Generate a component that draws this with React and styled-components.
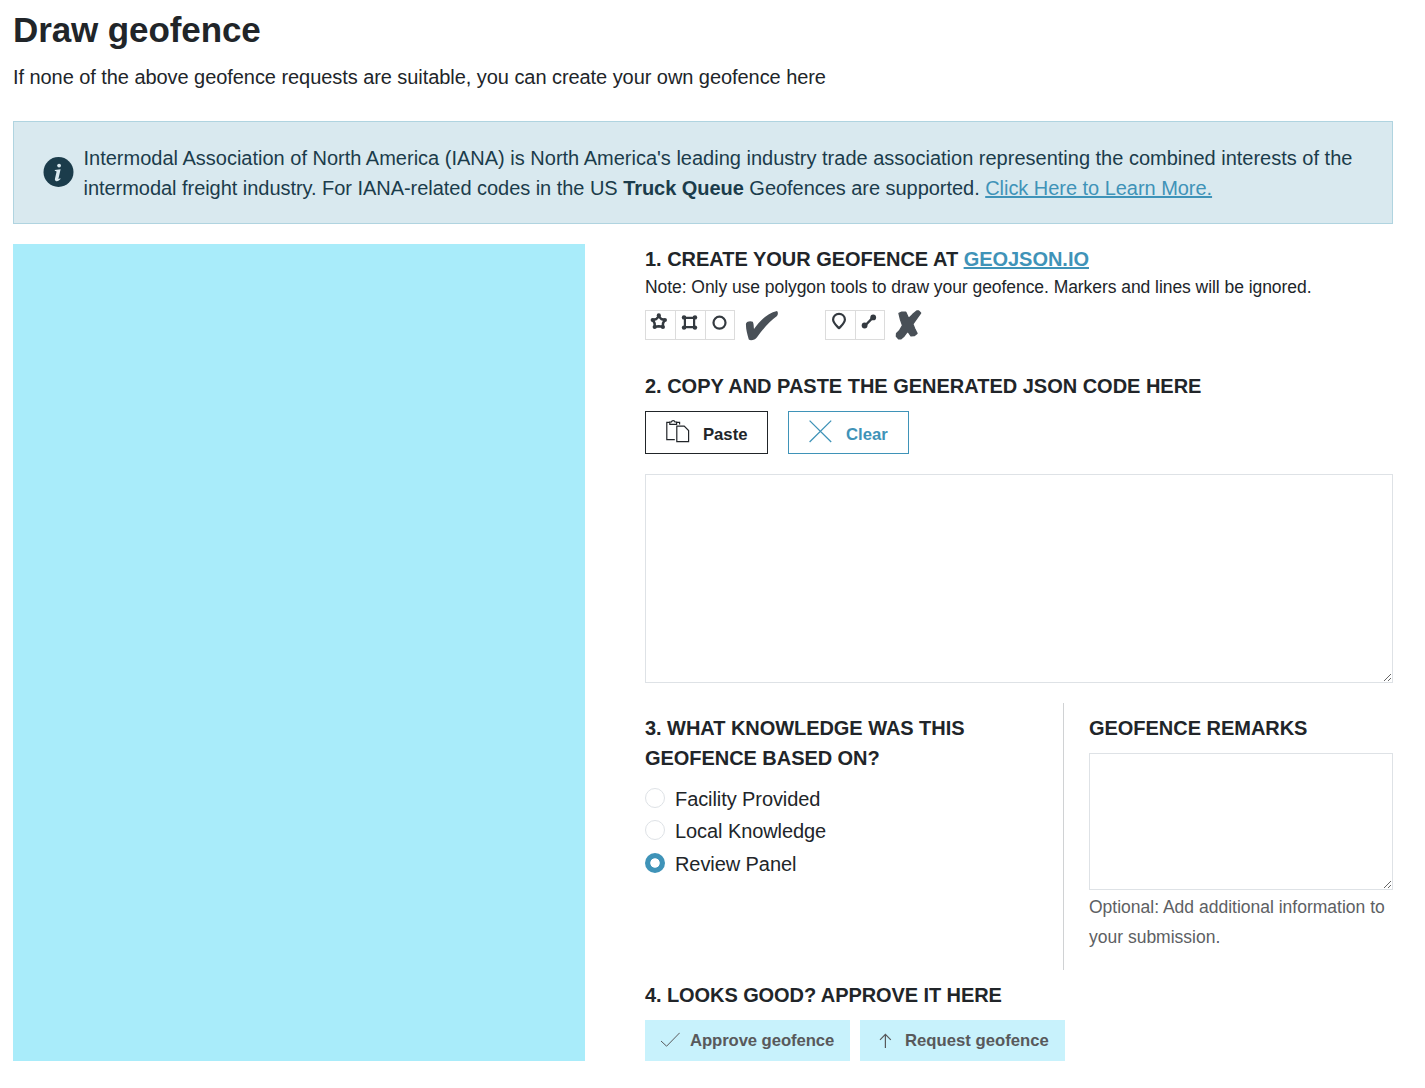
import React, { useState } from 'react';
import styled, { createGlobalStyle, css } from 'styled-components';

const GlobalStyle = createGlobalStyle`
  *, *::before, *::after { box-sizing: border-box; }
  body {
    margin: 0;
    background: #fff;
    color: #212529;
    font: 20px/30px "Liberation Sans", Helvetica, Arial, sans-serif;
  }
  svg { display: block; }
`;

const Page = styled.main`
  width: 1380px;
  margin-left: 13px;
  padding-top: 9px;
`;

const Title = styled.h1`
  margin: 0;
  font-size: 35px;
  line-height: 42px;
  letter-spacing: -0.1px;
`;

const Lead = styled.p`
  margin: 11px 0 29px;
  letter-spacing: -0.06px;
`;

const Notice = styled.section`
  display: flex;
  align-items: center;
  gap: 9.5px;
  height: 103px;
  margin-bottom: 20px;
  padding: 0 29px;
  border: 1px solid #b0d4e0;
  background: #d9e9ef;
  color: #1b3c4b;
`;

const NoticeIcon = styled.svg`
  flex: none;
  width: 31px;
  height: 31px;
`;

const NoticeText = styled.p`
  margin: 1px 0 0;
  white-space: nowrap;
`;

const NoticeLine = styled.span`
  display: block;
  letter-spacing: ${(p) => p.$spacing || 0}px;
`;

const Link = styled.a`
  color: #3f93b8;
  text-decoration: underline;
  text-decoration-thickness: 2px;
  text-underline-offset: 1px;
  text-decoration-skip-ink: none;
`;

const Columns = styled.div`
  display: grid;
  grid-template-columns: 572px 748px;
  column-gap: 60px;
  height: 817px;
`;

const MapPane = styled.div`
  background: #a9ecfa;
`;

const Steps = styled.div`
  display: flex;
  flex-direction: column;
`;

const Heading = styled.h2`
  margin: 0;
  font-size: 20px;
  line-height: 30px;
  text-transform: uppercase;
  letter-spacing: ${(p) => p.$spacing || 0}px;
`;

const Note = styled.p`
  margin: 0 0 10px;
  font-size: 17.5px;
  line-height: 26px;
  letter-spacing: -0.055px;
`;

const ToolRow = styled.div`
  display: flex;
  align-items: center;
  height: 30px;
  margin-bottom: 31px;
`;

const ToolGroup = styled.div`
  display: flex;
  border: 1px solid #dcdcdc;
`;

const ToolCell = styled.div`
  width: ${(p) => p.$w || 30}px;
  height: 28px;
  color: #343a40;

  & + & {
    border-left: 1px solid #dcdcdc;
  }

  svg {
    width: 28px;
    height: 28px;
  }
`;

const Verdict = styled.svg`
  width: 34px;
  height: 32px;
  margin: 0 ${(p) => p.$after || 0}px 0 10px;
  color: #495057;
`;

const Actions = styled.div`
  display: flex;
  gap: ${(p) => p.$gap}px;
  margin: 10px 0 ${(p) => p.$after || 0}px;
`;

const ButtonBase = styled.button`
  display: flex;
  align-items: center;
  margin: 0;
  font: 700 16.7px/24px "Liberation Sans", Helvetica, Arial, sans-serif;
  letter-spacing: -0.02px;
  white-space: nowrap;
`;

const OutlineButton = styled(ButtonBase)`
  width: ${(p) => p.$w}px;
  height: 43px;
  padding: 5px 0 0 20px;
  border: 1px solid currentColor;
  background: #fff;
  color: ${(p) => (p.$accent ? '#3f93b8' : '#212529')};

  svg {
    width: 24px;
    height: 24px;
    margin: -6px 13px 0 0;
  }
`;

const SoftButton = styled(ButtonBase)`
  width: 205px;
  height: 41px;
  padding: 0 0 0 15px;
  border: 0;
  background: #c8f2fc;
  color: #58595b;
  letter-spacing: ${(p) => p.$spacing || 0}px;

  svg {
    width: 20px;
    height: 20px;
    margin: -2px 10px 0 0;
  }
`;

const fieldStyle = css`
  display: block;
  width: 100%;
  margin: 0;
  padding: 8px 12px;
  border: 1px solid #dee2e6;
  border-radius: 0;
  outline: 0;
  background: #fff;
  color: inherit;
  font: inherit;
  resize: vertical;
`;

const JsonField = styled.textarea`
  ${fieldStyle}
  height: 209px;
`;

const RemarksField = styled.textarea`
  ${fieldStyle}
  height: 137px;
`;

const Details = styled.div`
  display: grid;
  grid-template-columns: 418px 330px;
  height: 267px;
  margin: 20px 0 10px;
`;

const Knowledge = styled.div`
  padding-top: 10px;
`;

const Remarks = styled.div`
  padding: 10px 0 0 25px;
  border-left: 1px solid #d0d2d4;

  h2 {
    margin-bottom: 10px;
  }
`;

const Help = styled.p`
  margin: 2px 0 0;
  color: #5d6063;
  font-size: 17.5px;
  line-height: 30px;
`;

const Options = styled.div`
  display: grid;
  grid-auto-rows: 32.5px;
  margin-top: 9.5px;
`;

const Option = styled.label`
  display: flex;
  align-items: center;
  gap: 10px;
  letter-spacing: -0.08px;
`;

const Radio = styled.input`
  appearance: none;
  flex: none;
  width: 20px;
  height: 20px;
  margin: 0 0 2px;
  border: 1px solid #dee2e6;
  border-radius: 50%;
  background: #fff;

  &:checked {
    border: 0;
    background: radial-gradient(circle, #fff 4.3px, #3f93b8 5.1px);
  }
`;

const InfoIcon = () => (
  <NoticeIcon viewBox="0 0 31 31">
    <circle cx="15.5" cy="15" r="15" fill="#1b3c4b" />
    <circle cx="16.1" cy="8.6" r="1.9" fill="#d9e9ef" />
    <path d="M11.9 12.9 L17.6 12.3 L15.5 21.4 C15.3 22.3 16 22.2 17 21.2 L17.7 21.8 C16.4 23.7 14.8 24.4 13.4 24.2 C12 24.1 11.7 23 12 21.6 L13.5 14.9 C13.6 14.2 13.2 14 11.8 13.9 Z" fill="#d9e9ef" />
  </NoticeIcon>
);

const StarTool = () => (
  <svg viewBox="0 0 28 28" fill="none" stroke="currentColor" strokeWidth="2.5" strokeLinejoin="round">
    <path d="M12.8 5.4 L15.3 8 L18.6 9 L17 12.4 L16.8 15.8 L12.8 15.3 L8.8 15.8 L8.6 12.4 L7 9 L10.3 8 Z" />
    <g fill="currentColor" stroke="none">
      <circle cx="12.8" cy="4.4" r="2.1" />
      <circle cx="18.9" cy="9" r="2.1" />
      <circle cx="16.9" cy="16" r="2.1" />
      <circle cx="8.7" cy="16" r="2.1" />
      <circle cx="6.7" cy="9" r="2.1" />
    </g>
  </svg>
);

const SquareTool = () => (
  <svg viewBox="0 0 28 28" fill="none" stroke="currentColor" strokeWidth="2.2">
    <path d="M7 6.8 H20 M7 16.2 H20 M8.9 5 V18 M18.1 5 V18" />
    <g fill="currentColor" stroke="none">
      <circle cx="8" cy="6.4" r="2.2" />
      <circle cx="19" cy="6.4" r="2.2" />
      <circle cx="8" cy="16.6" r="2.2" />
      <circle cx="19" cy="16.6" r="2.2" />
    </g>
  </svg>
);

const CircleTool = () => (
  <svg viewBox="0 0 28 28" fill="none" stroke="currentColor" strokeWidth="2.2">
    <circle cx="13.5" cy="11.7" r="6" />
  </svg>
);

const PinTool = () => (
  <svg viewBox="0 0 28 28" fill="none" stroke="currentColor" strokeWidth="2.2" strokeLinejoin="round">
    <path d="M13 17.2 C10.8 14.8 7.1 12.3 7.1 8.6 C7.1 5.2 9.7 2.8 13 2.8 C16.3 2.8 18.9 5.2 18.9 8.6 C18.9 12.3 15.2 14.8 13 17.2 Z" />
  </svg>
);

const LineTool = () => (
  <svg viewBox="0 0 28 28" fill="currentColor">
    <path d="M9.2 14.5 L16.8 6.7" stroke="currentColor" strokeWidth="2.4" />
    <circle cx="8.6" cy="14.5" r="2.9" />
    <circle cx="17.2" cy="6.4" r="2.9" />
  </svg>
);

const Check = () => (
  <Verdict viewBox="745 309 34 32" $after={46}>
    <path
      fill="currentColor"
      d="M746 323.5 C747 321.2 750.5 320.6 752.8 321.8 C753.9 323.8 753.6 327 754 329 C759 322 767 313 777 311 C778.3 312 778.1 314.5 777 316 C770 321 762 330 757.2 337 C755 340.3 750.5 341 748.8 339.6 C747.2 334 745.6 328 746 323.5 Z"
    />
  </Verdict>
);

const Cross = () => (
  <Verdict viewBox="895 309 34 32">
    <path
      fill="currentColor"
      stroke="currentColor"
      strokeWidth="1.4"
      strokeLinejoin="round"
      d="M899 313.4 L901.8 312.2 L905.8 312.2 L908.6 318.6 L912.8 314.4 L916.8 311 L918.6 311 L920.6 313 L912.8 324 L914.6 328.6 L917 333.4 L914.2 335.6 L911 335.8 L907.7 331 L904 336.2 L901 338.8 L898.6 338.8 L896.4 336.4 L896.6 333.6 L899.4 330.8 L902.6 325.4 L900.4 319.2 Z"
    />
  </Verdict>
);

const PasteIcon = () => (
  <svg viewBox="0 0 24 24" fill="none" stroke="currentColor" strokeWidth="1.2">
    <path d="M8.8 19.6 H0.8 V2.4 H3.8 M10.6 2.4 H13.6 V4.6" />
    <path d="M3.8 4.4 V2 H5.4 C5.8 0.2 8.6 0.2 9 2 H10.6 V4.4 Z" />
    <path d="M10.8 6.2 H18.2 L22.6 10.6 V21.6 H10.8 Z" />
  </svg>
);

const ClearIcon = () => (
  <svg viewBox="0 0 24 24" fill="none" stroke="currentColor" strokeWidth="1.3">
    <path d="M0.6 0.6 L22.2 22 M22.2 0.6 L0.6 22" />
  </svg>
);

const TickIcon = () => (
  <svg viewBox="0 0 20 20" fill="none" stroke="currentColor" strokeWidth="1">
    <path d="M1 11 L6.6 16.2 L19.7 2.8" />
  </svg>
);

const ArrowIcon = () => (
  <svg viewBox="0 0 20 20" fill="none" stroke="currentColor" strokeWidth="1.2">
    <path d="M10.4 18 V4.6 M5 9.8 L10.4 4.4 L15.8 9.8" />
  </svg>
);

const sources = ['Facility Provided', 'Local Knowledge', 'Review Panel'];

export default function App() {
  const [source, setSource] = useState('Review Panel');

  return (
    <>
      <GlobalStyle />
      <Page>
        <Title>Draw geofence</Title>
        <Lead>If none of the above geofence requests are suitable, you can create your own geofence here</Lead>

        <Notice>
          <InfoIcon />
          <NoticeText>
            <NoticeLine>
              Intermodal Association of North America (IANA) is North America's leading industry trade association representing the combined interests of the
            </NoticeLine>
            <NoticeLine $spacing={-0.04}>
              intermodal freight industry. For IANA-related codes in the US <b>Truck Queue</b> Geofences are supported.{' '}
              <Link>Click Here to Learn More.</Link>
            </NoticeLine>
          </NoticeText>
        </Notice>

        <Columns>
          <MapPane />
          <Steps>
            <Heading $spacing={-0.025}>
              1. Create your geofence at <Link>geojson.io</Link>
            </Heading>
            <Note>Note: Only use polygon tools to draw your geofence. Markers and lines will be ignored.</Note>
            <ToolRow>
              <ToolGroup>
                <ToolCell $w={29}><StarTool /></ToolCell>
                <ToolCell><SquareTool /></ToolCell>
                <ToolCell $w={29}><CircleTool /></ToolCell>
              </ToolGroup>
              <Check />
              <ToolGroup>
                <ToolCell $w={29}><PinTool /></ToolCell>
                <ToolCell $w={29}><LineTool /></ToolCell>
              </ToolGroup>
              <Cross />
            </ToolRow>

            <Heading $spacing={-0.015}>2. Copy and paste the generated JSON code here</Heading>
            <Actions $gap={20} $after={20}>
              <OutlineButton $w={123}><PasteIcon />Paste</OutlineButton>
              <OutlineButton $w={121} $accent><ClearIcon />Clear</OutlineButton>
            </Actions>
            <JsonField />

            <Details>
              <Knowledge>
                <Heading $spacing={-0.05}>3. What knowledge was this<br />geofence based on?</Heading>
                <Options>
                  {sources.map((name) => (
                    <Option key={name}>
                      <Radio type="radio" name="source" checked={source === name} onChange={() => setSource(name)} />
                      {name}
                    </Option>
                  ))}
                </Options>
              </Knowledge>
              <Remarks>
                <Heading $spacing={-0.03}>Geofence remarks</Heading>
                <RemarksField />
                <Help>Optional: Add additional information to your submission.</Help>
              </Remarks>
            </Details>

            <Heading $spacing={-0.085}>4. Looks good? Approve it here</Heading>
            <Actions $gap={10}>
              <SoftButton $spacing={-0.09}><TickIcon />Approve geofence</SoftButton>
              <SoftButton><ArrowIcon />Request geofence</SoftButton>
            </Actions>
          </Steps>
        </Columns>
      </Page>
    </>
  );
}
